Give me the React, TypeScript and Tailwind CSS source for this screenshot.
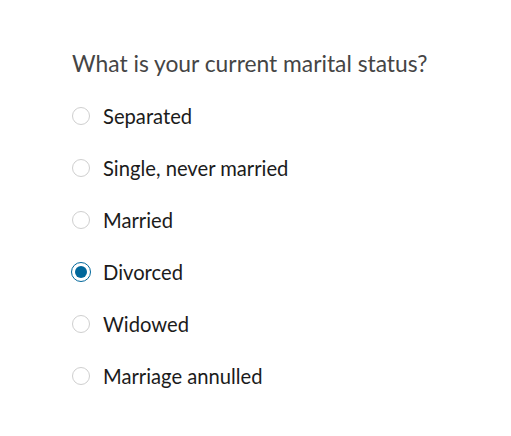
import {useState} from "react";

const options = [
    'Separated',
    'Single, never married',
    'Married',
    'Divorced',
    'Widowed',
    'Marriage annulled',
];

export default function App() {
    const [value, setValue] = useState('Divorced');

    return (
        <div className="min-h-screen bg-white pl-[72px] pt-[49px] font-['Lato',sans-serif]">
            <h1 className="text-[22.8px] leading-[28px] text-[#454545] mb-[13px]">
                What is your current marital status?
            </h1>
            <div className="flex flex-col">
                {options.map((option) => {
                    const checked = value === option;
                    return (
                        <label key={option} className="h-[52px] flex items-center cursor-pointer"
                               onClick={() => setValue(option)}>
                            {checked ? (
                                <span
                                    className="w-[20px] h-[20px] -ml-px rounded-full border-[1.5px] border-[#00679b] flex items-center justify-center">
                                    <span className="w-[12px] h-[12px] rounded-full bg-[#00679b]"/>
                                </span>
                            ) : (
                                <span className="w-[18px] h-[18px] rounded-full border border-[#cfcfcf]"/>
                            )}
                            <span className={`text-[20.2px] text-[#1b1b1b] ${checked ? 'ml-[12px]' : 'ml-[13px]'}`}>
                                {option}
                            </span>
                        </label>
                    );
                })}
            </div>
        </div>
    );
}
